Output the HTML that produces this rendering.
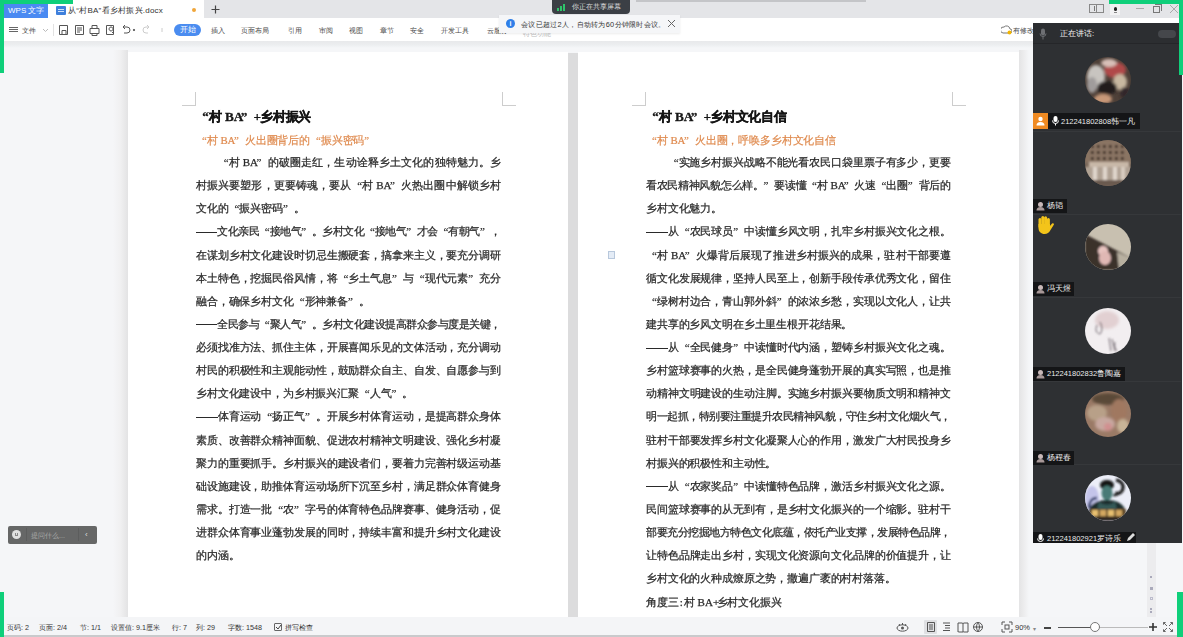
<!DOCTYPE html>
<html><head><meta charset="utf-8">
<style>
*{margin:0;padding:0;box-sizing:border-box}
html,body{width:1183px;height:637px;overflow:hidden;background:#f5f6f8;font-family:"Liberation Sans",sans-serif;position:relative}
.a{position:absolute}
.g{background:#0fcf7a}
/* top bars */
#tabbar{left:0;top:0;width:1183px;height:18px;background:#e4e5e8}
#toolbar{left:0;top:18px;width:1183px;height:23px;background:#fff}
#shade{left:0;top:41px;width:1183px;height:7px;background:linear-gradient(#e8e9eb,#eceef0 55%,#f5f6f8)}
.tb{font-size:7.3px;color:#4a4a4a;top:25px;line-height:11px;white-space:nowrap}
/* pages */
.page{background:#fff;top:52px;height:566px}
.ln{position:absolute;font-family:"Liberation Serif",serif;font-size:11px;line-height:14px;color:#2a2a2a;white-space:nowrap;height:14px;filter:blur(0.3px);-webkit-text-stroke:0.25px currentColor}
.ln{display:flex}.j{justify-content:space-between}
.c{display:block;font-style:normal;text-align:center;flex:none}.dash{position:relative;height:14px}.dash:after{content:"";position:absolute;left:0;right:0;top:7.5px;height:1px;background:currentColor}.ql{text-align:right}.qr{text-align:left}
.ttl{font-weight:bold;font-size:13.2px;color:#151515;line-height:16px;height:16px;-webkit-text-stroke:0.3px currentColor}
.sub{color:#df8a4e;font-weight:normal;font-size:10.8px;-webkit-text-stroke:0.2px currentColor}
.cm{position:absolute;background:#cdcdcd}
/* status */
#status{left:0;top:617px;width:1183px;height:20px;background:#f4f5f7}
.st{font-size:7.2px;color:#333;top:623px;line-height:10px;white-space:nowrap}
/* panel */
#panel{left:1033px;top:23px;width:148.5px;height:519.5px;background:#2e3033}
.lbl{position:absolute;left:1033px;height:14px;background:#141517;color:#ececec;font-size:7.5px;line-height:14px;white-space:nowrap}
.av{position:absolute;width:46px;height:46px;border-radius:50%;left:1084px}
</style></head><body>
<div id="tabbar" class="a"></div>

<div id="toolbar" class="a"></div>
<div id="shade" class="a"></div>
<!-- pages -->
<div class="a" style="left:113px;top:50px;width:15px;height:568px;background:linear-gradient(90deg,#f5f6f8,#f0f0f1 50%,#e3e3e4)"></div>
<div class="a page" style="left:128px;width:440px"></div>
<div class="a" style="left:568px;top:53px;width:10px;height:565px;background:#dcdcdd"></div>
<div class="a page" style="left:578px;width:441px"></div>
<div class="a" style="left:1019px;top:50px;width:10px;height:568px;background:linear-gradient(90deg,#e4e4e5,#ebebec 40%,#f5f6f8)"></div>

<div id="status" class="a"></div>
<div id="panel" class="a"></div>
<div class="ln ttl" style="left:196px;top:109px"><i class="c ql" style="width:12.80px">“</i><i class="c" style="width:12.80px">村</i><i class="c" style="width:19.20px">&nbsp;BA</i><i class="c qr" style="width:12.80px">”</i><i class="c" style="width:6.40px">+</i><i class="c" style="width:12.80px">乡</i><i class="c" style="width:12.80px">村</i><i class="c" style="width:12.80px">振</i><i class="c" style="width:12.80px">兴</i></div>
<div class="ln sub" style="left:196px;top:133px"><i class="c ql" style="width:10.87px">“</i><i class="c" style="width:10.87px">村</i><i class="c" style="width:16.30px">&nbsp;BA</i><i class="c qr" style="width:10.87px">”</i><i class="c" style="width:10.87px">火</i><i class="c" style="width:10.87px">出</i><i class="c" style="width:10.87px">圈</i><i class="c" style="width:10.87px">背</i><i class="c" style="width:10.87px">后</i><i class="c" style="width:10.87px">的</i><i class="c ql" style="width:10.87px">“</i><i class="c" style="width:10.87px">振</i><i class="c" style="width:10.87px">兴</i><i class="c" style="width:10.87px">密</i><i class="c" style="width:10.87px">码</i><i class="c qr" style="width:10.87px">”</i></div>
<div class="ln j" style="left:217.7px;top:155.0px;width:283.3px"><i class="c ql" style="width:10.87px">“</i><i class="c" style="width:10.87px">村</i><i class="c" style="width:16.30px">&nbsp;BA</i><i class="c qr" style="width:10.87px">”</i><i class="c" style="width:10.87px">的</i><i class="c" style="width:10.87px">破</i><i class="c" style="width:10.87px">圈</i><i class="c" style="width:10.87px">走</i><i class="c" style="width:10.87px">红</i><i class="c" style="width:10.87px">，</i><i class="c" style="width:10.87px">生</i><i class="c" style="width:10.87px">动</i><i class="c" style="width:10.87px">诠</i><i class="c" style="width:10.87px">释</i><i class="c" style="width:10.87px">乡</i><i class="c" style="width:10.87px">土</i><i class="c" style="width:10.87px">文</i><i class="c" style="width:10.87px">化</i><i class="c" style="width:10.87px">的</i><i class="c" style="width:10.87px">独</i><i class="c" style="width:10.87px">特</i><i class="c" style="width:10.87px">魅</i><i class="c" style="width:10.87px">力</i><i class="c" style="width:10.87px">。</i><i class="c" style="width:10.87px">乡</i></div>
<div class="ln j" style="left:196px;top:178.1px;width:305px"><i class="c" style="width:10.87px">村</i><i class="c" style="width:10.87px">振</i><i class="c" style="width:10.87px">兴</i><i class="c" style="width:10.87px">要</i><i class="c" style="width:10.87px">塑</i><i class="c" style="width:10.87px">形</i><i class="c" style="width:10.87px">，</i><i class="c" style="width:10.87px">更</i><i class="c" style="width:10.87px">要</i><i class="c" style="width:10.87px">铸</i><i class="c" style="width:10.87px">魂</i><i class="c" style="width:10.87px">，</i><i class="c" style="width:10.87px">要</i><i class="c" style="width:10.87px">从</i><i class="c ql" style="width:10.87px">“</i><i class="c" style="width:10.87px">村</i><i class="c" style="width:16.30px">&nbsp;BA</i><i class="c qr" style="width:10.87px">”</i><i class="c" style="width:10.87px">火</i><i class="c" style="width:10.87px">热</i><i class="c" style="width:10.87px">出</i><i class="c" style="width:10.87px">圈</i><i class="c" style="width:10.87px">中</i><i class="c" style="width:10.87px">解</i><i class="c" style="width:10.87px">锁</i><i class="c" style="width:10.87px">乡</i><i class="c" style="width:10.87px">村</i></div>
<div class="ln" style="left:196px;top:201.3px"><i class="c" style="width:10.87px">文</i><i class="c" style="width:10.87px">化</i><i class="c" style="width:10.87px">的</i><i class="c ql" style="width:10.87px">“</i><i class="c" style="width:10.87px">振</i><i class="c" style="width:10.87px">兴</i><i class="c" style="width:10.87px">密</i><i class="c" style="width:10.87px">码</i><i class="c qr" style="width:10.87px">”</i><i class="c" style="width:10.87px">。</i></div>
<div class="ln j" style="left:196px;top:224.4px;width:305px"><i class="c dash" style="width:10.52px"></i><i class="c dash" style="width:10.52px"></i><i class="c" style="width:10.52px">文</i><i class="c" style="width:10.52px">化</i><i class="c" style="width:10.52px">亲</i><i class="c" style="width:10.52px">民</i><i class="c ql" style="width:10.52px">“</i><i class="c" style="width:10.52px">接</i><i class="c" style="width:10.52px">地</i><i class="c" style="width:10.52px">气</i><i class="c qr" style="width:10.52px">”</i><i class="c" style="width:10.52px">。</i><i class="c" style="width:10.52px">乡</i><i class="c" style="width:10.52px">村</i><i class="c" style="width:10.52px">文</i><i class="c" style="width:10.52px">化</i><i class="c ql" style="width:10.52px">“</i><i class="c" style="width:10.52px">接</i><i class="c" style="width:10.52px">地</i><i class="c" style="width:10.52px">气</i><i class="c qr" style="width:10.52px">”</i><i class="c" style="width:10.52px">才</i><i class="c" style="width:10.52px">会</i><i class="c ql" style="width:10.52px">“</i><i class="c" style="width:10.52px">有</i><i class="c" style="width:10.52px">朝</i><i class="c" style="width:10.52px">气</i><i class="c qr" style="width:10.52px">”</i><i class="c" style="width:10.52px">，</i></div>
<div class="ln j" style="left:196px;top:247.5px;width:305px"><i class="c" style="width:10.87px">在</i><i class="c" style="width:10.87px">谋</i><i class="c" style="width:10.87px">划</i><i class="c" style="width:10.87px">乡</i><i class="c" style="width:10.87px">村</i><i class="c" style="width:10.87px">文</i><i class="c" style="width:10.87px">化</i><i class="c" style="width:10.87px">建</i><i class="c" style="width:10.87px">设</i><i class="c" style="width:10.87px">时</i><i class="c" style="width:10.87px">切</i><i class="c" style="width:10.87px">忌</i><i class="c" style="width:10.87px">生</i><i class="c" style="width:10.87px">搬</i><i class="c" style="width:10.87px">硬</i><i class="c" style="width:10.87px">套</i><i class="c" style="width:10.87px">，</i><i class="c" style="width:10.87px">搞</i><i class="c" style="width:10.87px">拿</i><i class="c" style="width:10.87px">来</i><i class="c" style="width:10.87px">主</i><i class="c" style="width:10.87px">义</i><i class="c" style="width:10.87px">，</i><i class="c" style="width:10.87px">要</i><i class="c" style="width:10.87px">充</i><i class="c" style="width:10.87px">分</i><i class="c" style="width:10.87px">调</i><i class="c" style="width:10.87px">研</i></div>
<div class="ln j" style="left:196px;top:270.6px;width:305px"><i class="c" style="width:10.87px">本</i><i class="c" style="width:10.87px">土</i><i class="c" style="width:10.87px">特</i><i class="c" style="width:10.87px">色</i><i class="c" style="width:10.87px">，</i><i class="c" style="width:10.87px">挖</i><i class="c" style="width:10.87px">掘</i><i class="c" style="width:10.87px">民</i><i class="c" style="width:10.87px">俗</i><i class="c" style="width:10.87px">风</i><i class="c" style="width:10.87px">情</i><i class="c" style="width:10.87px">，</i><i class="c" style="width:10.87px">将</i><i class="c ql" style="width:10.87px">“</i><i class="c" style="width:10.87px">乡</i><i class="c" style="width:10.87px">土</i><i class="c" style="width:10.87px">气</i><i class="c" style="width:10.87px">息</i><i class="c qr" style="width:10.87px">”</i><i class="c" style="width:10.87px">与</i><i class="c ql" style="width:10.87px">“</i><i class="c" style="width:10.87px">现</i><i class="c" style="width:10.87px">代</i><i class="c" style="width:10.87px">元</i><i class="c" style="width:10.87px">素</i><i class="c qr" style="width:10.87px">”</i><i class="c" style="width:10.87px">充</i><i class="c" style="width:10.87px">分</i></div>
<div class="ln" style="left:196px;top:293.8px"><i class="c" style="width:10.87px">融</i><i class="c" style="width:10.87px">合</i><i class="c" style="width:10.87px">，</i><i class="c" style="width:10.87px">确</i><i class="c" style="width:10.87px">保</i><i class="c" style="width:10.87px">乡</i><i class="c" style="width:10.87px">村</i><i class="c" style="width:10.87px">文</i><i class="c" style="width:10.87px">化</i><i class="c ql" style="width:10.87px">“</i><i class="c" style="width:10.87px">形</i><i class="c" style="width:10.87px">神</i><i class="c" style="width:10.87px">兼</i><i class="c" style="width:10.87px">备</i><i class="c qr" style="width:10.87px">”</i><i class="c" style="width:10.87px">。</i></div>
<div class="ln j" style="left:196px;top:316.9px;width:305px"><i class="c dash" style="width:10.52px"></i><i class="c dash" style="width:10.52px"></i><i class="c" style="width:10.52px">全</i><i class="c" style="width:10.52px">民</i><i class="c" style="width:10.52px">参</i><i class="c" style="width:10.52px">与</i><i class="c ql" style="width:10.52px">“</i><i class="c" style="width:10.52px">聚</i><i class="c" style="width:10.52px">人</i><i class="c" style="width:10.52px">气</i><i class="c qr" style="width:10.52px">”</i><i class="c" style="width:10.52px">。</i><i class="c" style="width:10.52px">乡</i><i class="c" style="width:10.52px">村</i><i class="c" style="width:10.52px">文</i><i class="c" style="width:10.52px">化</i><i class="c" style="width:10.52px">建</i><i class="c" style="width:10.52px">设</i><i class="c" style="width:10.52px">提</i><i class="c" style="width:10.52px">高</i><i class="c" style="width:10.52px">群</i><i class="c" style="width:10.52px">众</i><i class="c" style="width:10.52px">参</i><i class="c" style="width:10.52px">与</i><i class="c" style="width:10.52px">度</i><i class="c" style="width:10.52px">是</i><i class="c" style="width:10.52px">关</i><i class="c" style="width:10.52px">键</i><i class="c" style="width:10.52px">，</i></div>
<div class="ln j" style="left:196px;top:340.0px;width:305px"><i class="c" style="width:10.87px">必</i><i class="c" style="width:10.87px">须</i><i class="c" style="width:10.87px">找</i><i class="c" style="width:10.87px">准</i><i class="c" style="width:10.87px">方</i><i class="c" style="width:10.87px">法</i><i class="c" style="width:10.87px">、</i><i class="c" style="width:10.87px">抓</i><i class="c" style="width:10.87px">住</i><i class="c" style="width:10.87px">主</i><i class="c" style="width:10.87px">体</i><i class="c" style="width:10.87px">，</i><i class="c" style="width:10.87px">开</i><i class="c" style="width:10.87px">展</i><i class="c" style="width:10.87px">喜</i><i class="c" style="width:10.87px">闻</i><i class="c" style="width:10.87px">乐</i><i class="c" style="width:10.87px">见</i><i class="c" style="width:10.87px">的</i><i class="c" style="width:10.87px">文</i><i class="c" style="width:10.87px">体</i><i class="c" style="width:10.87px">活</i><i class="c" style="width:10.87px">动</i><i class="c" style="width:10.87px">，</i><i class="c" style="width:10.87px">充</i><i class="c" style="width:10.87px">分</i><i class="c" style="width:10.87px">调</i><i class="c" style="width:10.87px">动</i></div>
<div class="ln j" style="left:196px;top:363.2px;width:305px"><i class="c" style="width:10.87px">村</i><i class="c" style="width:10.87px">民</i><i class="c" style="width:10.87px">的</i><i class="c" style="width:10.87px">积</i><i class="c" style="width:10.87px">极</i><i class="c" style="width:10.87px">性</i><i class="c" style="width:10.87px">和</i><i class="c" style="width:10.87px">主</i><i class="c" style="width:10.87px">观</i><i class="c" style="width:10.87px">能</i><i class="c" style="width:10.87px">动</i><i class="c" style="width:10.87px">性</i><i class="c" style="width:10.87px">，</i><i class="c" style="width:10.87px">鼓</i><i class="c" style="width:10.87px">励</i><i class="c" style="width:10.87px">群</i><i class="c" style="width:10.87px">众</i><i class="c" style="width:10.87px">自</i><i class="c" style="width:10.87px">主</i><i class="c" style="width:10.87px">、</i><i class="c" style="width:10.87px">自</i><i class="c" style="width:10.87px">发</i><i class="c" style="width:10.87px">、</i><i class="c" style="width:10.87px">自</i><i class="c" style="width:10.87px">愿</i><i class="c" style="width:10.87px">参</i><i class="c" style="width:10.87px">与</i><i class="c" style="width:10.87px">到</i></div>
<div class="ln" style="left:196px;top:386.3px"><i class="c" style="width:10.87px">乡</i><i class="c" style="width:10.87px">村</i><i class="c" style="width:10.87px">文</i><i class="c" style="width:10.87px">化</i><i class="c" style="width:10.87px">建</i><i class="c" style="width:10.87px">设</i><i class="c" style="width:10.87px">中</i><i class="c" style="width:10.87px">，</i><i class="c" style="width:10.87px">为</i><i class="c" style="width:10.87px">乡</i><i class="c" style="width:10.87px">村</i><i class="c" style="width:10.87px">振</i><i class="c" style="width:10.87px">兴</i><i class="c" style="width:10.87px">汇</i><i class="c" style="width:10.87px">聚</i><i class="c ql" style="width:10.87px">“</i><i class="c" style="width:10.87px">人</i><i class="c" style="width:10.87px">气</i><i class="c qr" style="width:10.87px">”</i><i class="c" style="width:10.87px">。</i></div>
<div class="ln j" style="left:196px;top:409.4px;width:305px"><i class="c dash" style="width:10.87px"></i><i class="c dash" style="width:10.87px"></i><i class="c" style="width:10.87px">体</i><i class="c" style="width:10.87px">育</i><i class="c" style="width:10.87px">运</i><i class="c" style="width:10.87px">动</i><i class="c ql" style="width:10.87px">“</i><i class="c" style="width:10.87px">扬</i><i class="c" style="width:10.87px">正</i><i class="c" style="width:10.87px">气</i><i class="c qr" style="width:10.87px">”</i><i class="c" style="width:10.87px">。</i><i class="c" style="width:10.87px">开</i><i class="c" style="width:10.87px">展</i><i class="c" style="width:10.87px">乡</i><i class="c" style="width:10.87px">村</i><i class="c" style="width:10.87px">体</i><i class="c" style="width:10.87px">育</i><i class="c" style="width:10.87px">运</i><i class="c" style="width:10.87px">动</i><i class="c" style="width:10.87px">，</i><i class="c" style="width:10.87px">是</i><i class="c" style="width:10.87px">提</i><i class="c" style="width:10.87px">高</i><i class="c" style="width:10.87px">群</i><i class="c" style="width:10.87px">众</i><i class="c" style="width:10.87px">身</i><i class="c" style="width:10.87px">体</i></div>
<div class="ln j" style="left:196px;top:432.6px;width:305px"><i class="c" style="width:10.87px">素</i><i class="c" style="width:10.87px">质</i><i class="c" style="width:10.87px">、</i><i class="c" style="width:10.87px">改</i><i class="c" style="width:10.87px">善</i><i class="c" style="width:10.87px">群</i><i class="c" style="width:10.87px">众</i><i class="c" style="width:10.87px">精</i><i class="c" style="width:10.87px">神</i><i class="c" style="width:10.87px">面</i><i class="c" style="width:10.87px">貌</i><i class="c" style="width:10.87px">、</i><i class="c" style="width:10.87px">促</i><i class="c" style="width:10.87px">进</i><i class="c" style="width:10.87px">农</i><i class="c" style="width:10.87px">村</i><i class="c" style="width:10.87px">精</i><i class="c" style="width:10.87px">神</i><i class="c" style="width:10.87px">文</i><i class="c" style="width:10.87px">明</i><i class="c" style="width:10.87px">建</i><i class="c" style="width:10.87px">设</i><i class="c" style="width:10.87px">、</i><i class="c" style="width:10.87px">强</i><i class="c" style="width:10.87px">化</i><i class="c" style="width:10.87px">乡</i><i class="c" style="width:10.87px">村</i><i class="c" style="width:10.87px">凝</i></div>
<div class="ln j" style="left:196px;top:455.7px;width:305px"><i class="c" style="width:10.87px">聚</i><i class="c" style="width:10.87px">力</i><i class="c" style="width:10.87px">的</i><i class="c" style="width:10.87px">重</i><i class="c" style="width:10.87px">要</i><i class="c" style="width:10.87px">抓</i><i class="c" style="width:10.87px">手</i><i class="c" style="width:10.87px">。</i><i class="c" style="width:10.87px">乡</i><i class="c" style="width:10.87px">村</i><i class="c" style="width:10.87px">振</i><i class="c" style="width:10.87px">兴</i><i class="c" style="width:10.87px">的</i><i class="c" style="width:10.87px">建</i><i class="c" style="width:10.87px">设</i><i class="c" style="width:10.87px">者</i><i class="c" style="width:10.87px">们</i><i class="c" style="width:10.87px">，</i><i class="c" style="width:10.87px">要</i><i class="c" style="width:10.87px">着</i><i class="c" style="width:10.87px">力</i><i class="c" style="width:10.87px">完</i><i class="c" style="width:10.87px">善</i><i class="c" style="width:10.87px">村</i><i class="c" style="width:10.87px">级</i><i class="c" style="width:10.87px">运</i><i class="c" style="width:10.87px">动</i><i class="c" style="width:10.87px">基</i></div>
<div class="ln j" style="left:196px;top:478.8px;width:305px"><i class="c" style="width:10.87px">础</i><i class="c" style="width:10.87px">设</i><i class="c" style="width:10.87px">施</i><i class="c" style="width:10.87px">建</i><i class="c" style="width:10.87px">设</i><i class="c" style="width:10.87px">，</i><i class="c" style="width:10.87px">助</i><i class="c" style="width:10.87px">推</i><i class="c" style="width:10.87px">体</i><i class="c" style="width:10.87px">育</i><i class="c" style="width:10.87px">运</i><i class="c" style="width:10.87px">动</i><i class="c" style="width:10.87px">场</i><i class="c" style="width:10.87px">所</i><i class="c" style="width:10.87px">下</i><i class="c" style="width:10.87px">沉</i><i class="c" style="width:10.87px">至</i><i class="c" style="width:10.87px">乡</i><i class="c" style="width:10.87px">村</i><i class="c" style="width:10.87px">，</i><i class="c" style="width:10.87px">满</i><i class="c" style="width:10.87px">足</i><i class="c" style="width:10.87px">群</i><i class="c" style="width:10.87px">众</i><i class="c" style="width:10.87px">体</i><i class="c" style="width:10.87px">育</i><i class="c" style="width:10.87px">健</i><i class="c" style="width:10.87px">身</i></div>
<div class="ln j" style="left:196px;top:501.9px;width:305px"><i class="c" style="width:10.87px">需</i><i class="c" style="width:10.87px">求</i><i class="c" style="width:10.87px">。</i><i class="c" style="width:10.87px">打</i><i class="c" style="width:10.87px">造</i><i class="c" style="width:10.87px">一</i><i class="c" style="width:10.87px">批</i><i class="c ql" style="width:10.87px">“</i><i class="c" style="width:10.87px">农</i><i class="c qr" style="width:10.87px">”</i><i class="c" style="width:10.87px">字</i><i class="c" style="width:10.87px">号</i><i class="c" style="width:10.87px">的</i><i class="c" style="width:10.87px">体</i><i class="c" style="width:10.87px">育</i><i class="c" style="width:10.87px">特</i><i class="c" style="width:10.87px">色</i><i class="c" style="width:10.87px">品</i><i class="c" style="width:10.87px">牌</i><i class="c" style="width:10.87px">赛</i><i class="c" style="width:10.87px">事</i><i class="c" style="width:10.87px">、</i><i class="c" style="width:10.87px">健</i><i class="c" style="width:10.87px">身</i><i class="c" style="width:10.87px">活</i><i class="c" style="width:10.87px">动</i><i class="c" style="width:10.87px">，</i><i class="c" style="width:10.87px">促</i></div>
<div class="ln j" style="left:196px;top:525.1px;width:305px"><i class="c" style="width:10.87px">进</i><i class="c" style="width:10.87px">群</i><i class="c" style="width:10.87px">众</i><i class="c" style="width:10.87px">体</i><i class="c" style="width:10.87px">育</i><i class="c" style="width:10.87px">事</i><i class="c" style="width:10.87px">业</i><i class="c" style="width:10.87px">蓬</i><i class="c" style="width:10.87px">勃</i><i class="c" style="width:10.87px">发</i><i class="c" style="width:10.87px">展</i><i class="c" style="width:10.87px">的</i><i class="c" style="width:10.87px">同</i><i class="c" style="width:10.87px">时</i><i class="c" style="width:10.87px">，</i><i class="c" style="width:10.87px">持</i><i class="c" style="width:10.87px">续</i><i class="c" style="width:10.87px">丰</i><i class="c" style="width:10.87px">富</i><i class="c" style="width:10.87px">和</i><i class="c" style="width:10.87px">提</i><i class="c" style="width:10.87px">升</i><i class="c" style="width:10.87px">乡</i><i class="c" style="width:10.87px">村</i><i class="c" style="width:10.87px">文</i><i class="c" style="width:10.87px">化</i><i class="c" style="width:10.87px">建</i><i class="c" style="width:10.87px">设</i></div>
<div class="ln" style="left:196px;top:548.2px"><i class="c" style="width:10.87px">的</i><i class="c" style="width:10.87px">内</i><i class="c" style="width:10.87px">涵</i><i class="c" style="width:10.87px">。</i></div>
<div class="ln ttl" style="left:646px;top:109px"><i class="c ql" style="width:12.80px">“</i><i class="c" style="width:12.80px">村</i><i class="c" style="width:19.20px">&nbsp;BA</i><i class="c qr" style="width:12.80px">”</i><i class="c" style="width:6.40px">+</i><i class="c" style="width:12.80px">乡</i><i class="c" style="width:12.80px">村</i><i class="c" style="width:12.80px">文</i><i class="c" style="width:12.80px">化</i><i class="c" style="width:12.80px">自</i><i class="c" style="width:12.80px">信</i></div>
<div class="ln sub" style="left:646px;top:133px"><i class="c ql" style="width:10.87px">“</i><i class="c" style="width:10.87px">村</i><i class="c" style="width:16.30px">&nbsp;BA</i><i class="c qr" style="width:10.87px">”</i><i class="c" style="width:10.87px">火</i><i class="c" style="width:10.87px">出</i><i class="c" style="width:10.87px">圈</i><i class="c" style="width:10.87px">，</i><i class="c" style="width:10.87px">呼</i><i class="c" style="width:10.87px">唤</i><i class="c" style="width:10.87px">多</i><i class="c" style="width:10.87px">乡</i><i class="c" style="width:10.87px">村</i><i class="c" style="width:10.87px">文</i><i class="c" style="width:10.87px">化</i><i class="c" style="width:10.87px">自</i><i class="c" style="width:10.87px">信</i></div>
<div class="ln j" style="left:667.7px;top:155.0px;width:283.3px"><i class="c ql" style="width:10.87px">“</i><i class="c" style="width:10.87px">实</i><i class="c" style="width:10.87px">施</i><i class="c" style="width:10.87px">乡</i><i class="c" style="width:10.87px">村</i><i class="c" style="width:10.87px">振</i><i class="c" style="width:10.87px">兴</i><i class="c" style="width:10.87px">战</i><i class="c" style="width:10.87px">略</i><i class="c" style="width:10.87px">不</i><i class="c" style="width:10.87px">能</i><i class="c" style="width:10.87px">光</i><i class="c" style="width:10.87px">看</i><i class="c" style="width:10.87px">农</i><i class="c" style="width:10.87px">民</i><i class="c" style="width:10.87px">口</i><i class="c" style="width:10.87px">袋</i><i class="c" style="width:10.87px">里</i><i class="c" style="width:10.87px">票</i><i class="c" style="width:10.87px">子</i><i class="c" style="width:10.87px">有</i><i class="c" style="width:10.87px">多</i><i class="c" style="width:10.87px">少</i><i class="c" style="width:10.87px">，</i><i class="c" style="width:10.87px">更</i><i class="c" style="width:10.87px">要</i></div>
<div class="ln j" style="left:646px;top:178.1px;width:305px"><i class="c" style="width:10.70px">看</i><i class="c" style="width:10.70px">农</i><i class="c" style="width:10.70px">民</i><i class="c" style="width:10.70px">精</i><i class="c" style="width:10.70px">神</i><i class="c" style="width:10.70px">风</i><i class="c" style="width:10.70px">貌</i><i class="c" style="width:10.70px">怎</i><i class="c" style="width:10.70px">么</i><i class="c" style="width:10.70px">样</i><i class="c" style="width:10.70px">。</i><i class="c qr" style="width:10.70px">”</i><i class="c" style="width:10.70px">要</i><i class="c" style="width:10.70px">读</i><i class="c" style="width:10.70px">懂</i><i class="c ql" style="width:10.70px">“</i><i class="c" style="width:10.70px">村</i><i class="c" style="width:16.05px">&nbsp;BA</i><i class="c qr" style="width:10.70px">”</i><i class="c" style="width:10.70px">火</i><i class="c" style="width:10.70px">速</i><i class="c ql" style="width:10.70px">“</i><i class="c" style="width:10.70px">出</i><i class="c" style="width:10.70px">圈</i><i class="c qr" style="width:10.70px">”</i><i class="c" style="width:10.70px">背</i><i class="c" style="width:10.70px">后</i><i class="c" style="width:10.70px">的</i></div>
<div class="ln" style="left:646px;top:201.3px"><i class="c" style="width:10.87px">乡</i><i class="c" style="width:10.87px">村</i><i class="c" style="width:10.87px">文</i><i class="c" style="width:10.87px">化</i><i class="c" style="width:10.87px">魅</i><i class="c" style="width:10.87px">力</i><i class="c" style="width:10.87px">。</i></div>
<div class="ln j" style="left:646px;top:224.4px;width:305px"><i class="c dash" style="width:10.87px"></i><i class="c dash" style="width:10.87px"></i><i class="c" style="width:10.87px">从</i><i class="c ql" style="width:10.87px">“</i><i class="c" style="width:10.87px">农</i><i class="c" style="width:10.87px">民</i><i class="c" style="width:10.87px">球</i><i class="c" style="width:10.87px">员</i><i class="c qr" style="width:10.87px">”</i><i class="c" style="width:10.87px">中</i><i class="c" style="width:10.87px">读</i><i class="c" style="width:10.87px">懂</i><i class="c" style="width:10.87px">乡</i><i class="c" style="width:10.87px">风</i><i class="c" style="width:10.87px">文</i><i class="c" style="width:10.87px">明</i><i class="c" style="width:10.87px">，</i><i class="c" style="width:10.87px">扎</i><i class="c" style="width:10.87px">牢</i><i class="c" style="width:10.87px">乡</i><i class="c" style="width:10.87px">村</i><i class="c" style="width:10.87px">振</i><i class="c" style="width:10.87px">兴</i><i class="c" style="width:10.87px">文</i><i class="c" style="width:10.87px">化</i><i class="c" style="width:10.87px">之</i><i class="c" style="width:10.87px">根</i><i class="c" style="width:10.87px">。</i></div>
<div class="ln j" style="left:646px;top:247.5px;width:305px"><i class="c ql" style="width:10.87px">“</i><i class="c" style="width:10.87px">村</i><i class="c" style="width:16.30px">&nbsp;BA</i><i class="c qr" style="width:10.87px">”</i><i class="c" style="width:10.87px">火</i><i class="c" style="width:10.87px">爆</i><i class="c" style="width:10.87px">背</i><i class="c" style="width:10.87px">后</i><i class="c" style="width:10.87px">展</i><i class="c" style="width:10.87px">现</i><i class="c" style="width:10.87px">了</i><i class="c" style="width:10.87px">推</i><i class="c" style="width:10.87px">进</i><i class="c" style="width:10.87px">乡</i><i class="c" style="width:10.87px">村</i><i class="c" style="width:10.87px">振</i><i class="c" style="width:10.87px">兴</i><i class="c" style="width:10.87px">的</i><i class="c" style="width:10.87px">成</i><i class="c" style="width:10.87px">果</i><i class="c" style="width:10.87px">，</i><i class="c" style="width:10.87px">驻</i><i class="c" style="width:10.87px">村</i><i class="c" style="width:10.87px">干</i><i class="c" style="width:10.87px">部</i><i class="c" style="width:10.87px">要</i><i class="c" style="width:10.87px">遵</i></div>
<div class="ln j" style="left:646px;top:270.6px;width:305px"><i class="c" style="width:10.87px">循</i><i class="c" style="width:10.87px">文</i><i class="c" style="width:10.87px">化</i><i class="c" style="width:10.87px">发</i><i class="c" style="width:10.87px">展</i><i class="c" style="width:10.87px">规</i><i class="c" style="width:10.87px">律</i><i class="c" style="width:10.87px">，</i><i class="c" style="width:10.87px">坚</i><i class="c" style="width:10.87px">持</i><i class="c" style="width:10.87px">人</i><i class="c" style="width:10.87px">民</i><i class="c" style="width:10.87px">至</i><i class="c" style="width:10.87px">上</i><i class="c" style="width:10.87px">，</i><i class="c" style="width:10.87px">创</i><i class="c" style="width:10.87px">新</i><i class="c" style="width:10.87px">手</i><i class="c" style="width:10.87px">段</i><i class="c" style="width:10.87px">传</i><i class="c" style="width:10.87px">承</i><i class="c" style="width:10.87px">优</i><i class="c" style="width:10.87px">秀</i><i class="c" style="width:10.87px">文</i><i class="c" style="width:10.87px">化</i><i class="c" style="width:10.87px">，</i><i class="c" style="width:10.87px">留</i><i class="c" style="width:10.87px">住</i></div>
<div class="ln j" style="left:646px;top:293.8px;width:305px"><i class="c ql" style="width:10.87px">“</i><i class="c" style="width:10.87px">绿</i><i class="c" style="width:10.87px">树</i><i class="c" style="width:10.87px">村</i><i class="c" style="width:10.87px">边</i><i class="c" style="width:10.87px">合</i><i class="c" style="width:10.87px">，</i><i class="c" style="width:10.87px">青</i><i class="c" style="width:10.87px">山</i><i class="c" style="width:10.87px">郭</i><i class="c" style="width:10.87px">外</i><i class="c" style="width:10.87px">斜</i><i class="c qr" style="width:10.87px">”</i><i class="c" style="width:10.87px">的</i><i class="c" style="width:10.87px">浓</i><i class="c" style="width:10.87px">浓</i><i class="c" style="width:10.87px">乡</i><i class="c" style="width:10.87px">愁</i><i class="c" style="width:10.87px">，</i><i class="c" style="width:10.87px">实</i><i class="c" style="width:10.87px">现</i><i class="c" style="width:10.87px">以</i><i class="c" style="width:10.87px">文</i><i class="c" style="width:10.87px">化</i><i class="c" style="width:10.87px">人</i><i class="c" style="width:10.87px">，</i><i class="c" style="width:10.87px">让</i><i class="c" style="width:10.87px">共</i></div>
<div class="ln" style="left:646px;top:316.9px"><i class="c" style="width:10.87px">建</i><i class="c" style="width:10.87px">共</i><i class="c" style="width:10.87px">享</i><i class="c" style="width:10.87px">的</i><i class="c" style="width:10.87px">乡</i><i class="c" style="width:10.87px">风</i><i class="c" style="width:10.87px">文</i><i class="c" style="width:10.87px">明</i><i class="c" style="width:10.87px">在</i><i class="c" style="width:10.87px">乡</i><i class="c" style="width:10.87px">土</i><i class="c" style="width:10.87px">里</i><i class="c" style="width:10.87px">生</i><i class="c" style="width:10.87px">根</i><i class="c" style="width:10.87px">开</i><i class="c" style="width:10.87px">花</i><i class="c" style="width:10.87px">结</i><i class="c" style="width:10.87px">果</i><i class="c" style="width:10.87px">。</i></div>
<div class="ln j" style="left:646px;top:340.0px;width:305px"><i class="c dash" style="width:10.87px"></i><i class="c dash" style="width:10.87px"></i><i class="c" style="width:10.87px">从</i><i class="c ql" style="width:10.87px">“</i><i class="c" style="width:10.87px">全</i><i class="c" style="width:10.87px">民</i><i class="c" style="width:10.87px">健</i><i class="c" style="width:10.87px">身</i><i class="c qr" style="width:10.87px">”</i><i class="c" style="width:10.87px">中</i><i class="c" style="width:10.87px">读</i><i class="c" style="width:10.87px">懂</i><i class="c" style="width:10.87px">时</i><i class="c" style="width:10.87px">代</i><i class="c" style="width:10.87px">内</i><i class="c" style="width:10.87px">涵</i><i class="c" style="width:10.87px">，</i><i class="c" style="width:10.87px">塑</i><i class="c" style="width:10.87px">铸</i><i class="c" style="width:10.87px">乡</i><i class="c" style="width:10.87px">村</i><i class="c" style="width:10.87px">振</i><i class="c" style="width:10.87px">兴</i><i class="c" style="width:10.87px">文</i><i class="c" style="width:10.87px">化</i><i class="c" style="width:10.87px">之</i><i class="c" style="width:10.87px">魂</i><i class="c" style="width:10.87px">。</i></div>
<div class="ln j" style="left:646px;top:363.2px;width:305px"><i class="c" style="width:10.87px">乡</i><i class="c" style="width:10.87px">村</i><i class="c" style="width:10.87px">篮</i><i class="c" style="width:10.87px">球</i><i class="c" style="width:10.87px">赛</i><i class="c" style="width:10.87px">事</i><i class="c" style="width:10.87px">的</i><i class="c" style="width:10.87px">火</i><i class="c" style="width:10.87px">热</i><i class="c" style="width:10.87px">，</i><i class="c" style="width:10.87px">是</i><i class="c" style="width:10.87px">全</i><i class="c" style="width:10.87px">民</i><i class="c" style="width:10.87px">健</i><i class="c" style="width:10.87px">身</i><i class="c" style="width:10.87px">蓬</i><i class="c" style="width:10.87px">勃</i><i class="c" style="width:10.87px">开</i><i class="c" style="width:10.87px">展</i><i class="c" style="width:10.87px">的</i><i class="c" style="width:10.87px">真</i><i class="c" style="width:10.87px">实</i><i class="c" style="width:10.87px">写</i><i class="c" style="width:10.87px">照</i><i class="c" style="width:10.87px">，</i><i class="c" style="width:10.87px">也</i><i class="c" style="width:10.87px">是</i><i class="c" style="width:10.87px">推</i></div>
<div class="ln j" style="left:646px;top:386.3px;width:305px"><i class="c" style="width:10.87px">动</i><i class="c" style="width:10.87px">精</i><i class="c" style="width:10.87px">神</i><i class="c" style="width:10.87px">文</i><i class="c" style="width:10.87px">明</i><i class="c" style="width:10.87px">建</i><i class="c" style="width:10.87px">设</i><i class="c" style="width:10.87px">的</i><i class="c" style="width:10.87px">生</i><i class="c" style="width:10.87px">动</i><i class="c" style="width:10.87px">注</i><i class="c" style="width:10.87px">脚</i><i class="c" style="width:10.87px">。</i><i class="c" style="width:10.87px">实</i><i class="c" style="width:10.87px">施</i><i class="c" style="width:10.87px">乡</i><i class="c" style="width:10.87px">村</i><i class="c" style="width:10.87px">振</i><i class="c" style="width:10.87px">兴</i><i class="c" style="width:10.87px">要</i><i class="c" style="width:10.87px">物</i><i class="c" style="width:10.87px">质</i><i class="c" style="width:10.87px">文</i><i class="c" style="width:10.87px">明</i><i class="c" style="width:10.87px">和</i><i class="c" style="width:10.87px">精</i><i class="c" style="width:10.87px">神</i><i class="c" style="width:10.87px">文</i></div>
<div class="ln j" style="left:646px;top:409.4px;width:305px"><i class="c" style="width:10.52px">明</i><i class="c" style="width:10.52px">一</i><i class="c" style="width:10.52px">起</i><i class="c" style="width:10.52px">抓</i><i class="c" style="width:10.52px">，</i><i class="c" style="width:10.52px">特</i><i class="c" style="width:10.52px">别</i><i class="c" style="width:10.52px">要</i><i class="c" style="width:10.52px">注</i><i class="c" style="width:10.52px">重</i><i class="c" style="width:10.52px">提</i><i class="c" style="width:10.52px">升</i><i class="c" style="width:10.52px">农</i><i class="c" style="width:10.52px">民</i><i class="c" style="width:10.52px">精</i><i class="c" style="width:10.52px">神</i><i class="c" style="width:10.52px">风</i><i class="c" style="width:10.52px">貌</i><i class="c" style="width:10.52px">，</i><i class="c" style="width:10.52px">守</i><i class="c" style="width:10.52px">住</i><i class="c" style="width:10.52px">乡</i><i class="c" style="width:10.52px">村</i><i class="c" style="width:10.52px">文</i><i class="c" style="width:10.52px">化</i><i class="c" style="width:10.52px">烟</i><i class="c" style="width:10.52px">火</i><i class="c" style="width:10.52px">气</i><i class="c" style="width:10.52px">，</i></div>
<div class="ln j" style="left:646px;top:432.6px;width:305px"><i class="c" style="width:10.87px">驻</i><i class="c" style="width:10.87px">村</i><i class="c" style="width:10.87px">干</i><i class="c" style="width:10.87px">部</i><i class="c" style="width:10.87px">要</i><i class="c" style="width:10.87px">发</i><i class="c" style="width:10.87px">挥</i><i class="c" style="width:10.87px">乡</i><i class="c" style="width:10.87px">村</i><i class="c" style="width:10.87px">文</i><i class="c" style="width:10.87px">化</i><i class="c" style="width:10.87px">凝</i><i class="c" style="width:10.87px">聚</i><i class="c" style="width:10.87px">人</i><i class="c" style="width:10.87px">心</i><i class="c" style="width:10.87px">的</i><i class="c" style="width:10.87px">作</i><i class="c" style="width:10.87px">用</i><i class="c" style="width:10.87px">，</i><i class="c" style="width:10.87px">激</i><i class="c" style="width:10.87px">发</i><i class="c" style="width:10.87px">广</i><i class="c" style="width:10.87px">大</i><i class="c" style="width:10.87px">村</i><i class="c" style="width:10.87px">民</i><i class="c" style="width:10.87px">投</i><i class="c" style="width:10.87px">身</i><i class="c" style="width:10.87px">乡</i></div>
<div class="ln" style="left:646px;top:455.7px"><i class="c" style="width:10.87px">村</i><i class="c" style="width:10.87px">振</i><i class="c" style="width:10.87px">兴</i><i class="c" style="width:10.87px">的</i><i class="c" style="width:10.87px">积</i><i class="c" style="width:10.87px">极</i><i class="c" style="width:10.87px">性</i><i class="c" style="width:10.87px">和</i><i class="c" style="width:10.87px">主</i><i class="c" style="width:10.87px">动</i><i class="c" style="width:10.87px">性</i><i class="c" style="width:10.87px">。</i></div>
<div class="ln j" style="left:646px;top:478.8px;width:305px"><i class="c dash" style="width:10.87px"></i><i class="c dash" style="width:10.87px"></i><i class="c" style="width:10.87px">从</i><i class="c ql" style="width:10.87px">“</i><i class="c" style="width:10.87px">农</i><i class="c" style="width:10.87px">家</i><i class="c" style="width:10.87px">奖</i><i class="c" style="width:10.87px">品</i><i class="c qr" style="width:10.87px">”</i><i class="c" style="width:10.87px">中</i><i class="c" style="width:10.87px">读</i><i class="c" style="width:10.87px">懂</i><i class="c" style="width:10.87px">特</i><i class="c" style="width:10.87px">色</i><i class="c" style="width:10.87px">品</i><i class="c" style="width:10.87px">牌</i><i class="c" style="width:10.87px">，</i><i class="c" style="width:10.87px">激</i><i class="c" style="width:10.87px">活</i><i class="c" style="width:10.87px">乡</i><i class="c" style="width:10.87px">村</i><i class="c" style="width:10.87px">振</i><i class="c" style="width:10.87px">兴</i><i class="c" style="width:10.87px">文</i><i class="c" style="width:10.87px">化</i><i class="c" style="width:10.87px">之</i><i class="c" style="width:10.87px">源</i><i class="c" style="width:10.87px">。</i></div>
<div class="ln j" style="left:646px;top:501.9px;width:305px"><i class="c" style="width:10.87px">民</i><i class="c" style="width:10.87px">间</i><i class="c" style="width:10.87px">篮</i><i class="c" style="width:10.87px">球</i><i class="c" style="width:10.87px">赛</i><i class="c" style="width:10.87px">事</i><i class="c" style="width:10.87px">的</i><i class="c" style="width:10.87px">从</i><i class="c" style="width:10.87px">无</i><i class="c" style="width:10.87px">到</i><i class="c" style="width:10.87px">有</i><i class="c" style="width:10.87px">，</i><i class="c" style="width:10.87px">是</i><i class="c" style="width:10.87px">乡</i><i class="c" style="width:10.87px">村</i><i class="c" style="width:10.87px">文</i><i class="c" style="width:10.87px">化</i><i class="c" style="width:10.87px">振</i><i class="c" style="width:10.87px">兴</i><i class="c" style="width:10.87px">的</i><i class="c" style="width:10.87px">一</i><i class="c" style="width:10.87px">个</i><i class="c" style="width:10.87px">缩</i><i class="c" style="width:10.87px">影</i><i class="c" style="width:10.87px">。</i><i class="c" style="width:10.87px">驻</i><i class="c" style="width:10.87px">村</i><i class="c" style="width:10.87px">干</i></div>
<div class="ln j" style="left:646px;top:525.1px;width:305px"><i class="c" style="width:10.52px">部</i><i class="c" style="width:10.52px">要</i><i class="c" style="width:10.52px">充</i><i class="c" style="width:10.52px">分</i><i class="c" style="width:10.52px">挖</i><i class="c" style="width:10.52px">掘</i><i class="c" style="width:10.52px">地</i><i class="c" style="width:10.52px">方</i><i class="c" style="width:10.52px">特</i><i class="c" style="width:10.52px">色</i><i class="c" style="width:10.52px">文</i><i class="c" style="width:10.52px">化</i><i class="c" style="width:10.52px">底</i><i class="c" style="width:10.52px">蕴</i><i class="c" style="width:10.52px">，</i><i class="c" style="width:10.52px">依</i><i class="c" style="width:10.52px">托</i><i class="c" style="width:10.52px">产</i><i class="c" style="width:10.52px">业</i><i class="c" style="width:10.52px">支</i><i class="c" style="width:10.52px">撑</i><i class="c" style="width:10.52px">，</i><i class="c" style="width:10.52px">发</i><i class="c" style="width:10.52px">展</i><i class="c" style="width:10.52px">特</i><i class="c" style="width:10.52px">色</i><i class="c" style="width:10.52px">品</i><i class="c" style="width:10.52px">牌</i><i class="c" style="width:10.52px">，</i></div>
<div class="ln j" style="left:646px;top:548.2px;width:305px"><i class="c" style="width:10.87px">让</i><i class="c" style="width:10.87px">特</i><i class="c" style="width:10.87px">色</i><i class="c" style="width:10.87px">品</i><i class="c" style="width:10.87px">牌</i><i class="c" style="width:10.87px">走</i><i class="c" style="width:10.87px">出</i><i class="c" style="width:10.87px">乡</i><i class="c" style="width:10.87px">村</i><i class="c" style="width:10.87px">，</i><i class="c" style="width:10.87px">实</i><i class="c" style="width:10.87px">现</i><i class="c" style="width:10.87px">文</i><i class="c" style="width:10.87px">化</i><i class="c" style="width:10.87px">资</i><i class="c" style="width:10.87px">源</i><i class="c" style="width:10.87px">向</i><i class="c" style="width:10.87px">文</i><i class="c" style="width:10.87px">化</i><i class="c" style="width:10.87px">品</i><i class="c" style="width:10.87px">牌</i><i class="c" style="width:10.87px">的</i><i class="c" style="width:10.87px">价</i><i class="c" style="width:10.87px">值</i><i class="c" style="width:10.87px">提</i><i class="c" style="width:10.87px">升</i><i class="c" style="width:10.87px">，</i><i class="c" style="width:10.87px">让</i></div>
<div class="ln" style="left:646px;top:571.3px"><i class="c" style="width:10.87px">乡</i><i class="c" style="width:10.87px">村</i><i class="c" style="width:10.87px">文</i><i class="c" style="width:10.87px">化</i><i class="c" style="width:10.87px">的</i><i class="c" style="width:10.87px">火</i><i class="c" style="width:10.87px">种</i><i class="c" style="width:10.87px">成</i><i class="c" style="width:10.87px">燎</i><i class="c" style="width:10.87px">原</i><i class="c" style="width:10.87px">之</i><i class="c" style="width:10.87px">势</i><i class="c" style="width:10.87px">，</i><i class="c" style="width:10.87px">撒</i><i class="c" style="width:10.87px">遍</i><i class="c" style="width:10.87px">广</i><i class="c" style="width:10.87px">袤</i><i class="c" style="width:10.87px">的</i><i class="c" style="width:10.87px">村</i><i class="c" style="width:10.87px">村</i><i class="c" style="width:10.87px">落</i><i class="c" style="width:10.87px">落</i><i class="c" style="width:10.87px">。</i></div>
<div class="ln" style="left:646px;top:594.5px"><i class="c" style="width:10.87px">角</i><i class="c" style="width:10.87px">度</i><i class="c" style="width:10.87px">三</i><i class="c" style="width:5.43px">:</i><i class="c" style="width:10.87px">村</i><i class="c" style="width:21.74px">&nbsp;BA+</i><i class="c" style="width:10.87px">乡</i><i class="c" style="width:10.87px">村</i><i class="c" style="width:10.87px">文</i><i class="c" style="width:10.87px">化</i><i class="c" style="width:10.87px">振</i><i class="c" style="width:10.87px">兴</i></div>
<!-- tab bar -->
<div class="a" style="left:48px;top:0;width:156px;height:18px;background:#fff"></div>
<div class="a" style="left:4px;top:3px;width:44px;height:15px;background:#4a8af2;color:#fff;font-size:8px;line-height:15px;padding-left:4px;white-space:nowrap">WPS 文字</div>
<div class="a" style="left:56px;top:6px;width:10px;height:9px;background:#3f80dc;border-radius:1px"></div>
<div class="a" style="left:58px;top:9px;width:6px;height:1px;background:#cfe0fa"></div>
<div class="a" style="left:58px;top:11px;width:6px;height:1px;background:#cfe0fa"></div>
<div class="a tb" style="left:68px;top:5px;font-size:8px;color:#333;letter-spacing:0.25px">从“村BA”看乡村振兴.docx</div>
<div class="a" style="left:192px;top:8px;width:4px;height:4px;border-radius:50%;background:#f0a63a"></div>
<svg class="a" style="left:211px;top:5px" width="9" height="9"><path d="M4.5 0.5v8M0.5 4.5h8" stroke="#444" stroke-width="1.2"/></svg>
<!-- window controls -->
<div class="a" style="left:1089px;top:4px;width:7px;height:9px;border:1px solid #888;border-right:none"></div><div class="a" style="left:1094px;top:6px;width:1px;height:5px;background:#777"></div>
<div class="a" style="left:1096px;top:4px;width:8px;height:9px;border:1px solid #888"></div>
<div class="a" style="left:1110px;top:4px;width:10px;height:11px;background:#f2f2f3"></div><div class="a" style="left:1113.5px;top:7px;width:3.5px;height:3.5px;border-radius:50%;background:#222"></div><div class="a" style="left:1114px;top:11.5px;width:2.5px;height:1px;background:#888"></div>
<div class="a" style="left:1136px;top:8px;width:8px;height:1px;background:#aaa"></div>
<div class="a" style="left:1153px;top:6px;width:7px;height:7px;border:1px solid #777"></div>
<div class="a" style="left:1155px;top:4px;width:7px;height:7px;border-top:1px solid #777;border-right:1px solid #777"></div>
<svg class="a" style="left:1169px;top:4px" width="10" height="10"><path d="M1 1L9 9M9 1L1 9" stroke="#aaa" stroke-width="1"/></svg>
<!-- toolbar -->
<div class="a" style="left:9px;top:27px;width:9px;height:1px;background:#666;box-shadow:0 2px 0 #666,0 4px 0 #666"></div>
<div class="a tb" style="left:22px">文件</div>
<svg class="a" style="left:42px;top:28px" width="7" height="5"><path d="M1 1L3.5 3.5L6 1" stroke="#bbb" fill="none"/></svg>
<div class="a" style="left:53px;top:24px;width:1px;height:12px;background:#e2e2e2"></div>
<svg class="a" style="left:58px;top:24px" width="110" height="12" fill="none" stroke="#555" stroke-width="1">
 <path d="M1.5 1.5h8v9h-8z M4 10.5v-4h4v4"/>
 <path d="M17.5 1.5h8v9h-8z M19 4h5M19 6h5M19 8h3"/>
 <path d="M32 4.5h9v5h-9z M34 4.5v-3h5v3 M34 9.5v2h5v-2"/>
 <path d="M48.5 1.5h7v9h-7z M53 7a2 2 0 1 1 .1 0M54 8l2 2"/>
 <path d="M65 3h4a3 3 0 0 1 0 6h-3 M65 3l2-2M65 3l2 2"/>
 <circle cx="76" cy="6" r="0.7" fill="#555"/>
 <path d="M91 3h-3a3 3 0 0 0 0 6h2 M91 3l-2-2M91 3l-2 2" stroke="#ccc"/>
 <path d="M104 4v4" stroke="#ccc"/>
</svg>
<div class="a" style="left:174px;top:24px;width:27px;height:12px;border-radius:6px;background:#4a8cf0;color:#fff;font-size:7.5px;line-height:12px;text-align:center">开始</div>
<div class="a tb" style="left:211px">插入</div>
<div class="a tb" style="left:241px">页面布局</div>
<div class="a tb" style="left:288px">引用</div>
<div class="a tb" style="left:319px">审阅</div>
<div class="a tb" style="left:349px">视图</div>
<div class="a tb" style="left:380px">章节</div>
<div class="a tb" style="left:410px">安全</div>
<div class="a tb" style="left:441px">开发工具</div>
<div class="a tb" style="left:487px">云服务</div>
<div class="a tb" style="left:523px;top:28px;color:#bbb">特色功能</div>
<svg class="a" style="left:1001px;top:25px" width="11" height="10"><path d="M2 8a3 3 0 0 1 1-6a3.5 3.5 0 0 1 6 2a2 2 0 0 1 0 4z" fill="none" stroke="#777"/><circle cx="8.5" cy="7.5" r="2" fill="#f2b500"/></svg>
<div class="a tb" style="left:1013px;font-size:7px">有修改</div>
<div class="a" style="left:636px;top:0;width:230px;height:1.5px;background:#c4c5c8"></div>
<!-- share tag -->
<div class="a" style="left:552px;top:0;width:78px;height:14px;background:#3b3f45;border-radius:0 0 4px 4px"></div>
<div class="a" style="left:557px;top:8px;width:2px;height:3px;background:#2fc46a;box-shadow:3px -2px 0 0 #2fc46a,3px 0 0 0 #2fc46a,6px -4px 0 0 #2fc46a,6px -2px 0 0 #2fc46a,6px 0 0 0 #2fc46a"></div>
<div class="a tb" style="left:572px;top:2px;color:#dcdcdc;font-size:7.1px">你正在共享屏幕</div>
<!-- notification -->
<div class="a" style="left:499px;top:15px;width:181px;height:18px;background:#f5f6f8;box-shadow:0 1px 2px rgba(0,0,0,.08)"></div>
<div class="a" style="left:506px;top:19px;width:9px;height:9px;border-radius:50%;background:#2f7fe8;color:#fff;font-size:7px;line-height:9px;text-align:center;font-weight:bold">i</div>
<div class="a tb" style="left:521px;top:18.5px;color:#333;font-size:7.4px;letter-spacing:0.3px">会议已超过2人，自动转为60分钟限时会议。</div>
<svg class="a" style="left:667px;top:19px" width="9" height="9"><path d="M1 1L8 8M8 1L1 8" stroke="#666" stroke-width="1"/></svg>
<!-- corner marks -->
<div class="cm" style="left:195px;top:92px;width:1px;height:13px"></div><div class="cm" style="left:182px;top:105px;width:14px;height:1px"></div>
<div class="cm" style="left:502px;top:92px;width:1px;height:13px"></div><div class="cm" style="left:502px;top:105px;width:14px;height:1px"></div>
<div class="cm" style="left:645px;top:92px;width:1px;height:13px"></div><div class="cm" style="left:632px;top:105px;width:14px;height:1px"></div>
<div class="cm" style="left:952px;top:92px;width:1px;height:13px"></div><div class="cm" style="left:952px;top:105px;width:14px;height:1px"></div>
<!-- small para icon -->
<div class="a" style="left:607.5px;top:251px;width:7px;height:8px;border:1px solid #b8c8dc;background:#e4ecf6"></div>
<!-- left widget -->
<div class="a" style="left:7.5px;top:525.5px;width:89px;height:18.5px;border-radius:2px;background:#666767"></div>
<div class="a" style="left:12px;top:530px;width:9px;height:9px;border-radius:50%;background:#e0e0e0"></div><div class="a" style="left:15px;top:533px;width:3px;height:3px;border:1px solid #888;border-top:none"></div><div class="a" style="left:26px;top:528px;width:1px;height:13px;background:#5c5d5d"></div>
<div class="a tb" style="left:31px;top:530px;color:#a8a8a8;font-size:7px">提问什么...</div>
<div class="a" style="left:78px;top:528px;width:1px;height:13px;background:#5c5d5d"></div>
<div class="a tb" style="left:85px;top:529px;color:#ddd;font-size:8px">‹</div>
<!-- scrollbar -->
<div class="a" style="left:1147px;top:543px;width:9px;height:74px;background:#ececee"></div>
<div class="a" style="left:1150px;top:576px;width:2px;height:2px;background:#aab"></div>
<div class="a" style="left:1149.5px;top:587px;width:3px;height:3px;background:#aab"></div>
<div class="a" style="left:1149.5px;top:597px;width:3px;height:3px;border:1px solid #bbc"></div>
<div class="a" style="left:1150px;top:608px;width:2px;height:2px;background:#aab;box-shadow:0 3px 0 #aab"></div>
<!-- status bar -->
<div class="a" style="left:0;top:635px;width:1183px;height:2px;background:#c9cacc"></div>
<div class="a st" style="left:7px">页码: 2</div>
<div class="a st" style="left:39px">页面: 2/4</div>
<div class="a st" style="left:80px">节: 1/1</div>
<div class="a st" style="left:111px">设置值: 9.1厘米</div>
<div class="a st" style="left:172px">行: 7</div>
<div class="a st" style="left:196px">列: 29</div>
<div class="a st" style="left:228px">字数: 1548</div>
<div class="a" style="left:274px;top:623px;width:8px;height:8px;border:1px solid #666;border-radius:1px"></div>
<svg class="a" style="left:275px;top:624px" width="7" height="6"><path d="M1 3L3 5L6 1" stroke="#444" fill="none"/></svg>
<div class="a st" style="left:285px">拼写检查</div>
<svg class="a" style="left:896px;top:622px" width="13" height="10"><ellipse cx="6.5" cy="6" rx="5.5" ry="3.2" fill="none" stroke="#555"/><circle cx="6.5" cy="6" r="1.5" fill="#555"/><path d="M3 2l1 1.5M6.5 1v2M10 2l-1 1.5" stroke="#555"/></svg>
<div class="a" style="left:924px;top:620px;width:13px;height:14px;background:#dfe0e3;border-radius:1px"></div>
<svg class="a" style="left:925px;top:621px" width="60" height="12" fill="none" stroke="#555">
 <path d="M2.5 1.5h7v9h-7z M4 4h4M4 6h4M4 8h4"/>
 <path d="M18 2h7M20 4.5h5M20 7h5M18 9.5h7"/>
 <path d="M33 2h4a1 1 0 0 1 1 1v8h-4a1 1 0 0 0-1 0z M38 3a1 1 0 0 1 1-1h4v9h-4a1 1 0 0 0-1 0"/>
 <circle cx="53" cy="6" r="4.5"/><path d="M48.5 6h9M53 1.5c-2 3-2 6 0 9M53 1.5c2 3 2 6 0 9"/>
</svg>
<svg class="a" style="left:1001px;top:621px" width="12" height="12" fill="none" stroke="#555"><path d="M1 4V1h3M8 1h3v3M11 8v3H8M4 11H1V8"/><rect x="4" y="4" width="4" height="4"/></svg>
<div class="a st" style="left:1015px;font-size:7.5px">90%</div>
<div class="a st" style="left:1033px;font-size:6px;top:624px;color:#888">▾</div>
<div class="a" style="left:1044px;top:627px;width:7px;height:1.5px;background:#444"></div>
<div class="a" style="left:1058px;top:627px;width:90px;height:1px;background:#bbb"></div>
<div class="a" style="left:1058px;top:627px;width:33px;height:1px;background:#555"></div>
<div class="a" style="left:1090px;top:622px;width:10px;height:10px;border-radius:50%;border:1px solid #777;background:#fff"></div>
<svg class="a" style="left:1148px;top:622px" width="10" height="10"><path d="M5 1v8M1 5h8" stroke="#333" stroke-width="1.6"/></svg>
<svg class="a" style="left:1162px;top:621px" width="12" height="12" fill="none" stroke="#666" stroke-width="1"><path d="M1.5 1.5L5 5M1.5 1.5h2.2M1.5 1.5v2.2M10.5 1.5L7 5M10.5 1.5h-2.2M10.5 1.5v2.2M1.5 10.5L5 7M1.5 10.5h2.2M1.5 10.5v-2.2M10.5 10.5L7 7M10.5 10.5h-2.2M10.5 10.5v-2.2"/></svg>
<!-- panel -->
<div class="a" style="left:1033px;top:23px;width:148px;height:21px;background:#2c2e31;border-bottom:1px solid #252629"></div>
<svg class="a" style="left:1039px;top:28px" width="8" height="12"><rect x="2" y="0.5" width="4" height="7" rx="2" fill="#6d6f73"/><path d="M1 5.5a3 3 0 0 0 6 0M4 8.5v3" stroke="#6d6f73" fill="none"/></svg>
<div class="a" style="left:1060px;top:29px;color:#f0f0f0;font-size:7.8px;line-height:10px;white-space:nowrap">正在讲话:</div>
<div class="a" style="left:1158px;top:30px;width:18px;height:8px;border-radius:4px;background:#45474b"></div>
<!-- row separators -->
<div class="a" style="left:1033px;top:131px;width:148px;height:1px;background:#36383b"></div>
<div class="a" style="left:1033px;top:214px;width:148px;height:1px;background:#36383b"></div>
<div class="a" style="left:1033px;top:297px;width:148px;height:1px;background:#36383b"></div>
<div class="a" style="left:1033px;top:381px;width:148px;height:1px;background:#36383b"></div>
<div class="a" style="left:1033px;top:464px;width:148px;height:1px;background:#36383b"></div>
<!-- avatars -->
<svg width="0" height="0" style="position:absolute"><defs>
<clipPath id="cc"><circle cx="23" cy="23" r="23"/></clipPath>
<filter id="bl" x="-20%" y="-20%" width="140%" height="140%"><feGaussianBlur stdDeviation="1.6"/></filter>
<filter id="bl2" x="-20%" y="-20%" width="140%" height="140%"><feGaussianBlur stdDeviation="0.8"/></filter>
</defs></svg>
<svg class="a" style="left:1084.7px;top:57px" width="46" height="46"><g clip-path="url(#cc)"><rect width="46" height="46" fill="#4e4038"/>
<g filter="url(#bl)">
<ellipse cx="11" cy="20" rx="9" ry="12" fill="#c8c4c0"/>
<ellipse cx="7" cy="28" rx="5" ry="8" fill="#a09c9c"/>
<ellipse cx="30" cy="13" rx="11" ry="8" fill="#b04848"/>
<ellipse cx="24" cy="6" rx="8" ry="4" fill="#d8c0b8"/>
<ellipse cx="35" cy="25" rx="7" ry="8" fill="#c8b8a0"/>
<ellipse cx="22" cy="31" rx="10" ry="7" fill="#241e1c"/>
<ellipse cx="18" cy="42" rx="9" ry="5" fill="#c89878"/>
<ellipse cx="40" cy="36" rx="5" ry="6" fill="#30282a"/>
</g></g></svg>
<svg class="a" style="left:1084.7px;top:140px" width="46" height="46"><g clip-path="url(#cc)"><rect width="46" height="46" fill="#7c6a5c"/>
<g filter="url(#bl2)">
<rect x="0" y="0" width="46" height="22" fill="#8a7464"/>
<rect x="6" y="5" width="2.5" height="3" fill="#2e241e"/><rect x="6" y="11" width="2.5" height="3" fill="#2e241e"/><rect x="6" y="17" width="2.5" height="3" fill="#2e241e"/><rect x="12" y="5" width="2.5" height="3" fill="#2e241e"/><rect x="12" y="11" width="2.5" height="3" fill="#2e241e"/><rect x="12" y="17" width="2.5" height="3" fill="#2e241e"/><rect x="18" y="5" width="2.5" height="3" fill="#2e241e"/><rect x="18" y="11" width="2.5" height="3" fill="#2e241e"/><rect x="18" y="17" width="2.5" height="3" fill="#2e241e"/><rect x="24" y="5" width="2.5" height="3" fill="#2e241e"/><rect x="24" y="11" width="2.5" height="3" fill="#2e241e"/><rect x="24" y="17" width="2.5" height="3" fill="#2e241e"/><rect x="30" y="5" width="2.5" height="3" fill="#2e241e"/><rect x="30" y="11" width="2.5" height="3" fill="#2e241e"/><rect x="30" y="17" width="2.5" height="3" fill="#2e241e"/><rect x="36" y="5" width="2.5" height="3" fill="#2e241e"/><rect x="36" y="11" width="2.5" height="3" fill="#2e241e"/><rect x="36" y="17" width="2.5" height="3" fill="#2e241e"/>
<rect x="4" y="22" width="40" height="5" fill="#c8b8a8"/>
<rect x="0" y="27" width="46" height="19" fill="#b0a294"/>
<rect x="8" y="27" width="4" height="14" fill="#e0d6cc"/>
<rect x="18" y="27" width="4" height="14" fill="#e0d6cc"/>
<rect x="28" y="27" width="4" height="14" fill="#e0d6cc"/>
<rect x="36" y="27" width="4" height="14" fill="#d8ccc0"/>
<rect x="0" y="40" width="46" height="6" fill="#6a5a50"/>
</g></g></svg>
<svg class="a" style="left:1084.7px;top:224px" width="46" height="46"><g clip-path="url(#cc)"><rect width="46" height="46" fill="#c8c0b0"/>
<g filter="url(#bl2)">
<path d="M0 10L46 34V46H0z" fill="#3a302c"/>
<path d="M32 28L46 34V46H34z" fill="#b8b0a0"/>
<ellipse cx="18" cy="27" rx="5" ry="5" fill="#e8c4c0"/>
<ellipse cx="20" cy="34" rx="6" ry="7" fill="#e0b8b4"/>
</g></g></svg>
<svg class="a" style="left:1084.7px;top:308px" width="46" height="46"><g clip-path="url(#cc)"><rect width="46" height="46" fill="#f2eef0"/>
<g filter="url(#bl)"><ellipse cx="22" cy="12" rx="12" ry="9" fill="#e2d0d2"/></g>
<g filter="url(#bl2)" stroke="#6a6068" stroke-width="1" fill="none">
<path d="M12 17c-2 5-1 8 3 9M15 14c2 4 3 8 0 12"/>
<path d="M24 30l2 13M27 31l3 12M30 34c-1 4 0 7 2 9"/>
</g></g></svg>
<svg class="a" style="left:1084.7px;top:390.5px" width="46" height="46"><g clip-path="url(#cc)"><rect width="46" height="46" fill="#9a7a66"/>
<g filter="url(#bl)">
<ellipse cx="23" cy="8" rx="16" ry="6" fill="#5a4838"/>
<ellipse cx="12" cy="22" rx="10" ry="8" fill="#b8a088"/>
<ellipse cx="34" cy="20" rx="8" ry="12" fill="#a07860"/>
<ellipse cx="20" cy="33" rx="10" ry="7" fill="#c8a8a0"/>
<ellipse cx="23" cy="36" rx="4" ry="4" fill="#d09090"/>
<ellipse cx="38" cy="35" rx="6" ry="7" fill="#c8b498"/>
</g></g></svg>
<svg class="a" style="left:1084.7px;top:475px" width="46" height="46"><g clip-path="url(#cc)"><rect width="46" height="46" fill="#eceef8"/>
<g filter="url(#bl2)">
<ellipse cx="7" cy="24" rx="7" ry="13" fill="#c4c4ea"/>
<path d="M31 5c6 1 9 6 6 11c-2 3-5 3-6 1" stroke="#151515" stroke-width="3" fill="none"/>
<path d="M36 16c-2 3-5 5-8 4" stroke="#151515" stroke-width="2" fill="none"/>
<ellipse cx="22" cy="10" rx="7" ry="5" fill="#141818"/>
<ellipse cx="22" cy="18" rx="5.5" ry="7.5" fill="#4a7a76"/>
<path d="M3 40c0-10 8-15 19-15s19 5 19 15z" fill="#1e2e2e"/>
<path d="M14 26c3 5 13 5 16 0l2 9H12z" fill="#355a58"/>
<path d="M4 33c0-6 3-10 8-10" stroke="#2a3868" stroke-width="2.5" fill="none"/>
<rect x="5" y="34" width="36" height="8" fill="#5a4428"/>
<rect x="7" y="35" width="6" height="6" fill="#e8c070"/><rect x="15" y="35" width="6" height="6" fill="#d4a860"/><rect x="23" y="35" width="6" height="6" fill="#e8c070"/><rect x="31" y="35" width="6" height="6" fill="#d4a860"/>
<rect x="0" y="42" width="46" height="4" fill="#2e2820"/>
</g></g></svg>
<!-- labels -->
<div class="a" style="left:1033px;top:113px;width:15px;height:16px;background:#ef8a22"></div>
<svg class="a" style="left:1036px;top:116px" width="9" height="10"><circle cx="4.5" cy="3" r="2.2" fill="#fff"/><path d="M0.5 9.5a4 3.5 0 0 1 8 0z" fill="#fff"/></svg>
<div class="lbl" style="left:1048px;top:113px;height:16px;line-height:18px;width:92px;padding-left:13px">212241802808韩一凡</div>
<svg class="a" style="left:1052px;top:116px" width="7" height="10"><rect x="1.5" y="0" width="4" height="6" rx="2" fill="#fff"/><path d="M0.5 4.5a3 3 0 0 0 6 0M3.5 7.5v2" stroke="#fff" fill="none"/></svg>

<div class="lbl" style="top:199px;width:34px;padding-left:14px">杨韬</div>
<div class="lbl" style="top:282px;width:41px;padding-left:14px">冯天煜</div>
<div class="lbl" style="top:367px;width:92px;padding-left:14px">212241802832鲁陶嘉</div>
<div class="lbl" style="top:451px;width:41px;padding-left:14px">杨程春</div>
<div class="lbl" style="top:532px;width:103px;height:11px;padding-left:14px;overflow:hidden;line-height:13px">212241802921罗诗乐</div>
<svg class="a" style="left:1036px;top:201px" width="9" height="10"><circle cx="4.5" cy="3.5" r="2.5" fill="#c8b8b8"/><path d="M0.5 9.5a4 3.5 0 0 1 8 0z" fill="#a89898"/></svg>
<svg class="a" style="left:1036px;top:284px" width="9" height="10"><circle cx="4.5" cy="3.5" r="2.5" fill="#c8b8b8"/><path d="M0.5 9.5a4 3.5 0 0 1 8 0z" fill="#a89898"/></svg>
<svg class="a" style="left:1036px;top:369px" width="9" height="10"><circle cx="4.5" cy="3.5" r="2.5" fill="#c8b8b8"/><path d="M0.5 9.5a4 3.5 0 0 1 8 0z" fill="#a89898"/></svg>
<svg class="a" style="left:1036px;top:453px" width="9" height="10"><circle cx="4.5" cy="3.5" r="2.5" fill="#c8b8b8"/><path d="M0.5 9.5a4 3.5 0 0 1 8 0z" fill="#a89898"/></svg>
<svg class="a" style="left:1037px;top:534px" width="7" height="9"><rect x="1.5" y="0" width="4" height="6" rx="2" fill="#fff"/><path d="M0.5 4.5a3 3 0 0 0 6 0" stroke="#fff" fill="none"/></svg>
<svg class="a" style="left:1126px;top:533px" width="9" height="9"><path d="M1 8l1-3l5-5l2 2l-5 5z" fill="#ddd"/></svg>
<!-- hand -->
<svg class="a" style="left:1036px;top:215px" width="20" height="20"><g fill="#f3c41a">
<rect x="2.5" y="3" width="3" height="10" rx="1.5"/>
<rect x="5.3" y="1" width="3" height="11" rx="1.5"/>
<rect x="8.1" y="1.2" width="3" height="11" rx="1.5"/>
<rect x="10.9" y="3" width="3" height="10" rx="1.5"/>
<path d="M2.5 9h11.4v2l2.2-2.4c1-1 2.4 0 1.7 1.2l-3.6 5.6c-1.2 2-2.8 3.6-5.6 3.6c-3.5 0-6.1-2.5-6.1-6z"/>
</g></svg>

<!-- green frame -->
<div class="a g" style="left:0;top:0;width:73px;height:4px"></div>
<div class="a g" style="left:0;top:0;width:4px;height:73px"></div>
<div class="a g" style="left:1109px;top:0;width:74px;height:4px"></div>
<div class="a g" style="left:1179px;top:0;width:4px;height:75px"></div>
<div class="a g" style="left:0;top:592px;width:4px;height:45px"></div>
<div class="a g" style="left:1177px;top:592px;width:6px;height:45px"></div>
</body></html>
